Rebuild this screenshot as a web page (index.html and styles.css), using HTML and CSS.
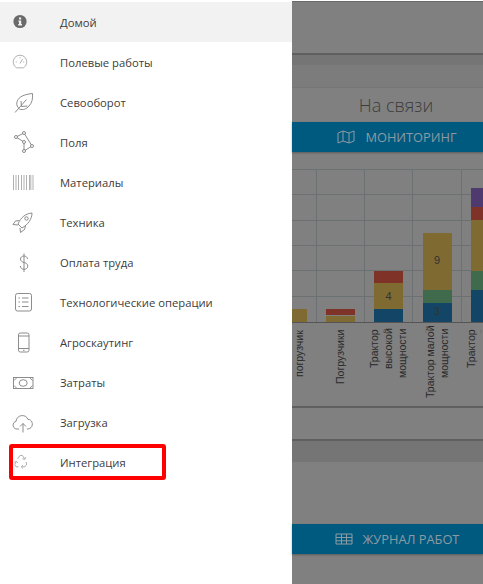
FILE: index.html
```html
<!DOCTYPE html>
<html lang="ru">
<head>
    <meta charset="UTF-8">
    <meta name="viewport" content="width=device-width, initial-scale=1.0">
    <title>Меню</title>
    <link rel="stylesheet" href="styles.css">
</head>
<body>
    <div class="app">
        <ul class="menu">
            <li class="menu-item active">
                <svg class="icon" viewBox="0 0 40 40"><circle class="solid" cx="20" cy="19.5" r="6.6"/><rect class="cut" x="19" y="15.500" width="2.200" height="2"/><path class="cut" d="M18.400 18.500h2.800v3.600h.8v1.300h-3.800v-1.300h.8v-2.400h-.6z"/></svg>
                <span>Домой</span>
            </li>
            <li class="menu-item">
                <svg class="icon faint" viewBox="0 0 40 40"><path d="M16.500 25.800a6.800 6.800 0 1 1 7 0"/><path d="M16.500 25.800h7M20 21.500l2.600-4.500M15.800 20h1M23.200 20h1M20 15.200v1"/></svg>
                <span>Полевые работы</span>
            </li>
            <li class="menu-item">
                <svg class="icon" viewBox="0 0 40 40"><path d="M19.500 27c-4.500-3.500-3-9 1-12c3-2 7-3 12-3.500c.5 5-.5 9.500-3.500 12.500c-2.500 3-6 4.500-9.500 3z"/><path d="M15 30.500l11.500-13M21.500 24.500l-.5-5.500M21.500 24.500l6-.5"/></svg>
                <span>Севооборот</span>
            </li>
            <li class="menu-item">
                <svg class="icon" viewBox="0 0 40 40"><path d="M16 15l8-4l8 13l-8 5v-9z"/><circle class="node" cx="16" cy="15" r="1.500"/><circle class="node" cx="24" cy="11" r="1.500"/><circle class="node" cx="32" cy="24" r="1.500"/><circle class="node" cx="24" cy="29" r="1.500"/><circle class="node" cx="24" cy="20" r="1.500"/></svg>
                <span>Поля</span>
            </li>
            <li class="menu-item">
                <svg class="icon faint" viewBox="0 0 40 40"><path d="M13.500 13v15M16 13v15M18.500 13v15M21.500 13v15M24 13v15M26.500 13v15M29.500 13v15M30.800 13v15M33 13v15"/></svg>
                <span>Материалы</span>
            </li>
            <li class="menu-item">
                <svg class="icon" viewBox="0 0 40 40"><path d="M18 22c3-7 8-10.500 14-11c0 6-4 11.500-10 15z"/><path d="M19.500 18.500l-4 .5l-2.500 3.500l5 .5M25.500 24l-1 3.500l-4 3l-.5-4.500"/><circle cx="26.500" cy="16.500" r="1.700"/></svg>
                <span>Техника</span>
            </li>
            <li class="menu-item">
                <svg class="icon" viewBox="0 0 40 40"><path d="M27.500 17c-.3-2-1.700-3-3.500-3c-2.200 0-3.500 1.400-3.500 3c0 4.500 7.300 2.700 7.300 7c0 2-1.500 3.300-3.700 3.300c-2.100 0-3.500-1.200-3.800-3.300M24 11.500v18.500"/></svg>
                <span>Оплата труда</span>
            </li>
            <li class="menu-item">
                <svg class="icon" viewBox="0 0 40 40"><rect x="15.500" y="11.500" width="16" height="17.500" rx="2"/><path d="M22 16h6.500M22 20h6.500M22 24.500h6.500M18.500 16h1.500M18.500 20h1.500M18.500 24.500h1.500"/></svg>
                <span>Технологические операции</span>
            </li>
            <li class="menu-item">
                <svg class="icon" viewBox="0 0 40 40"><rect x="18.500" y="11" width="10.500" height="19" rx="1.800"/><path d="M18.500 14h10.500M18.500 26.500h10.500M23 28.300h1.500"/></svg>
                <span>Агроскаутинг</span>
            </li>
            <li class="menu-item">
                <svg class="icon" viewBox="0 0 40 40"><rect x="13.500" y="15.500" width="19.500" height="11"/><ellipse cx="23.200" cy="21" rx="4" ry="3.300"/><path d="M14 18.500l2.500-2.500M14 23.500l2.500 2.500M32.500 18.500l-2.500-2.500M32.500 23.500l-2.500 2.500"/></svg>
                <span>Затраты</span>
            </li>
            <li class="menu-item">
                <svg class="icon" viewBox="0 0 40 40"><path d="M19 27h-2c-5 0-5-7-1-7.500c.5-7 10-8 12-2c5-.5 6.500 8.500 0 9.500h-1"/><path d="M23 30.500v-9M20 24.500l3-3l3 3"/></svg>
                <span>Загрузка</span>
            </li>
            <li class="menu-item">
                <svg class="icon faint" viewBox="0 0 40 40"><path d="M17.500 17l2.500-3.500h2.500l2 3.500M25.500 15l-.7 2.300l-2.300-.5"/><path d="M26 20l.8 2l-1.800 2.800h-3.500M23 23.200l-1.700 1.600l1.700 1.500"/><path d="M18.500 24.800h-2.500l-1.200-2.300l1.500-3M14.300 20.300l2.100-1l1.400 1.700"/></svg>
                <span>Интеграция</span>
                <div class="callout"></div>
            </li>
        </ul>

        <div class="page">
            <div class="block top-block"></div>
            <div class="band band-top"></div>
            <div class="block sub-block"></div>
            <h2 class="status">На связи</h2>
            <div class="action">
                <svg class="action-icon" viewBox="0 0 18 14"><path d="M1 3l5-2l6 2l5-2v10l-5 2l-6-2l-5 2zM6 1v10M12 3v10"/></svg>
                <span>МОНИТОРИНГ</span>
            </div>
            <svg class="chart" viewBox="292 152 191 254">
                <path class="grid" d="M292 169.500h191M292 194.500h191M292 220.500h191M292 245.500h191M292 270.500h191M292 296.500h191M316.500 169v153M364.500 169v153M412.500 169v153M461.500 169v153"/>

                <rect class="yellow" x="292" y="309" width="15" height="13"/>
                <rect class="red" x="326" y="309" width="29" height="6"/>
                <rect class="yellow" x="326" y="316" width="29" height="6"/>

                <rect class="red" x="374" y="271" width="29" height="12"/>
                <rect class="yellow" x="374" y="283" width="29" height="26"/>
                <rect class="blue" x="374" y="309" width="29" height="13"/>

                <rect class="yellow" x="423" y="233" width="29" height="57"/>
                <rect class="green" x="423" y="290" width="29" height="13"/>
                <rect class="blue" x="423" y="303" width="29" height="19"/>

                <rect class="purple" x="471" y="188" width="12" height="19"/>
                <rect class="red" x="471" y="207" width="12" height="13"/>
                <rect class="yellow" x="471" y="220" width="12" height="51"/>
                <rect class="green" x="471" y="271" width="12" height="19"/>
                <rect class="blue" x="471" y="290" width="12" height="32"/>

                <path class="axis" d="M292 322.500h191"/>

                <text class="value" x="388.500" y="300">4</text>
                <text class="value" x="437" y="264">9</text>
                <text class="value" x="437" y="315">3</text>

                <text class="label" transform="translate(303 377) rotate(-90)">погрузчик</text>
                <text class="label" transform="translate(344 384) rotate(-90)">Погрузчики</text>
                <text class="label" transform="translate(378 368) rotate(-90)">Трактор</text>
                <text class="label" transform="translate(392 369) rotate(-90)">высокой</text>
                <text class="label" transform="translate(406 378) rotate(-90)">мощности</text>
                <text class="label" transform="translate(434 398) rotate(-90)">Трактор малой</text>
                <text class="label" transform="translate(448 378) rotate(-90)">мощности</text>
                <text class="label" transform="translate(475 368) rotate(-90)">Трактор</text>

                <path class="tick" d="M383.500 330v3M426 330v3M481 330v3"/>
            </svg>
            <div class="block mid-block"></div>
            <div class="band band-low"></div>
            <div class="spacer"></div>
            <div class="action">
                <svg class="action-icon" viewBox="0 0 18 14"><path d="M1 2h16v10h-16zM1 5.500h16M1 8.800h16M6.500 2v10M11.500 2v10"/></svg>
                <span>ЖУРНАЛ РАБОТ</span>
            </div>
        </div>
    </div>
</body>
</html>
```

FILE: styles.css
```css
html, body {
    margin: 0;
    height: 100%;
}

body {
    font-family: 'Open Sans', sans-serif;
    background-color: #fff;
}

.app {
    display: flex;
    height: 584px;
    overflow: hidden;
}

/* Side menu */
.menu {
    flex: 0 0 292px;
    margin: 0;
    padding: 2px 0 0;
    list-style: none;
    background-color: #fff;
}

.menu-item {
    position: relative;
    display: flex;
    align-items: center;
    gap: 20px;
    height: 40px;
    font-size: 11.25px;
    color: #3c3c3c;
}

.menu-item.active {
    background-color: #f2f2f2;
}

.icon {
    flex: none;
    width: 40px;
    height: 40px;
    fill: none;
    stroke: #808080;
    stroke-width: 0.9;
}

.icon.faint {
    stroke: #a8a8a8;
}

.icon .solid {
    fill: #6a6a6a;
    stroke: none;
}

.icon .cut {
    fill: #f2f2f2;
    stroke: none;
}

.icon .node {
    fill: #fff;
}

.callout {
    position: absolute;
    top: 2px;
    left: 9px;
    width: 157px;
    height: 36px;
    box-sizing: border-box;
    border: 4px solid #f00;
    border-radius: 3px;
}

/* Dimmed page behind the menu */
.page {
    flex: 1;
    min-width: 0;
    margin-top: 1px;
    background-color: #808080;
    border-top: 1px solid #6a6a6a;
}

.block {
    background-color: #808080;
}

.top-block {
    height: 51px;
    border-bottom: 2px solid #5f5f5f;
}

.band {
    background-color: #757575;
}

.band-top {
    height: 10px;
}

.sub-block {
    height: 22px;
    background-color: #7c7c7c;
    border-bottom: 1px solid #767676;
}

.status {
    height: 34px;
    margin: 0;
    padding-left: 17px;
    font-size: 18px;
    font-weight: 300;
    line-height: 34px;
    text-align: center;
    color: #3c3c3c;
}

.action {
    display: flex;
    align-items: center;
    justify-content: center;
    gap: 10px;
    height: 30px;
    padding-left: 19px;
    font-size: 12.8px;
    color: #8c9ba3;
    background-color: #005a80;
    box-shadow: 0 1px 2px rgba(0, 0, 0, 0.3);
}

.action-icon {
    width: 18px;
    height: 14px;
    fill: none;
    stroke: #8c9ba3;
    stroke-width: 1;
}

.chart {
    display: block;
    width: 191px;
    height: 254px;
    font-family: 'Liberation Sans', sans-serif;
}

.grid {
    fill: none;
    stroke: #6b7073;
    stroke-width: 1;
}

.axis {
    fill: none;
    stroke: #555;
    stroke-width: 1;
}

.tick {
    fill: none;
    stroke: #6a6a6a;
    stroke-width: 0.8;
}

.yellow { fill: #7f6a32; }
.red { fill: #7f3328; }
.blue { fill: #134666; }
.green { fill: #3f6b4c; }
.purple { fill: #4f3a70; }

.value {
    font-size: 11px;
    text-anchor: middle;
    fill: #333;
}

.label {
    font-size: 10.5px;
    fill: #2a2a2a;
}

.mid-block {
    height: 31px;
    border-top: 2px solid #5f5f5f;
    border-bottom: 2px solid #5f5f5f;
}

.band-low {
    height: 21px;
}

.spacer {
    height: 62px;
}
```
